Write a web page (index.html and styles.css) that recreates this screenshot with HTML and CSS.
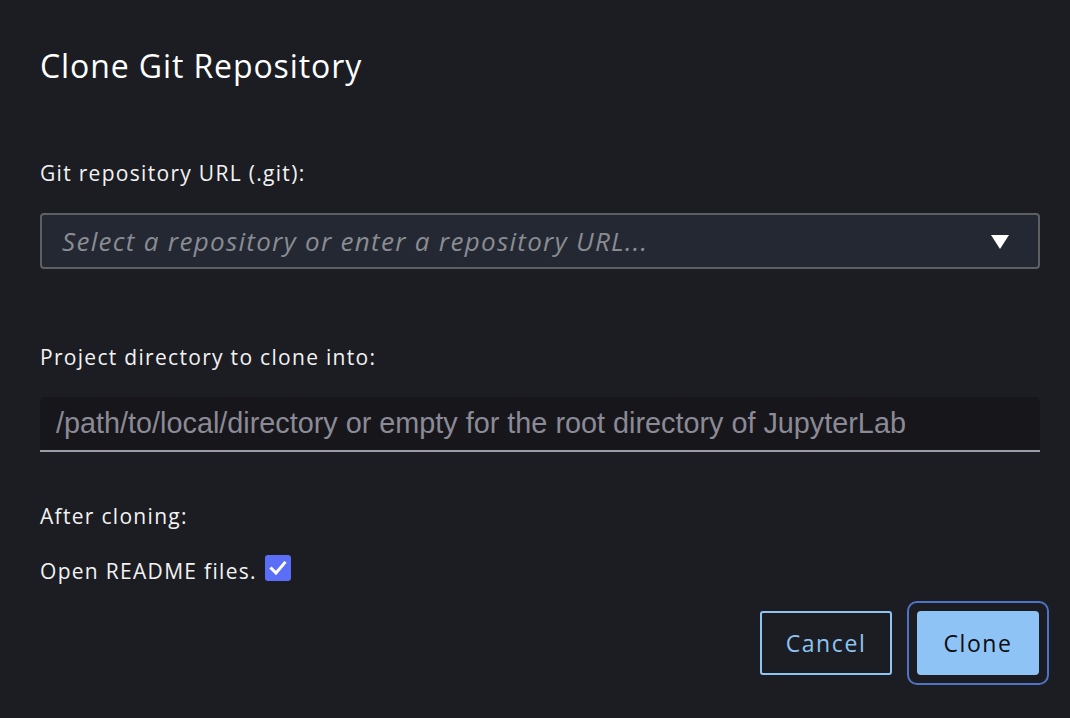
FILE: index.html
```html
<!DOCTYPE html>
<html>
<head>
<meta charset="utf-8">
<link rel="stylesheet" href="styles.css">
</head>
<body>
<div class="dialog">
  <h1 class="title">Clone Git Repository</h1>
  <label class="label first">Git repository URL (.git):</label>
  <div class="select">
    <span class="select-ph">Select a repository or enter a repository URL...</span>
    <svg class="caret" width="20" height="16" viewBox="0 0 20 16"><polygon points="1,1 19,1 10,15" fill="#ffffff"/></svg>
  </div>
  <label class="label second">Project directory to clone into:</label>
  <div class="input"><span class="input-ph">/path/to/local/directory or empty for the root directory of JupyterLab</span></div>
  <div class="label third">After cloning:</div>
  <div class="check-row">
    <span>Open README files.</span>
    <span class="checkbox"><svg width="18" height="16" viewBox="0 0 18 16"><path d="M2.5 8.5 L7 13 L15.5 3" fill="none" stroke="#ffffff" stroke-width="3" stroke-linecap="square"/></svg></span>
  </div>
  <div class="actions">
    <button class="btn cancel">Cancel</button>
    <div class="focus-ring"><button class="btn clone">Clone</button></div>
  </div>
</div>
</body>
</html>
```
FILE: styles.css
```css
html, body {
  margin: 0;
  padding: 0;
  background: #1c1d22;
}
body {
  width: 1070px;
  height: 718px;
  overflow: hidden;
  font-family: "Open Sans", "Noto Sans", sans-serif;
  color: #ffffff;
}
.dialog {
  padding: 0 30px 0 40px;
  display: flex;
  flex-direction: column;
}
.title {
  margin: 41px 0 0 0;
  font-size: 32px;
  font-weight: 400;
  line-height: 50px;
  letter-spacing: 0.9px;
}
.label {
  display: block;
  font-size: 21px;
  line-height: 28px;
  letter-spacing: 1.3px;
  color: #f2f2f2;
}
.label.first { margin-top: 68px; }
.select {
  margin-top: 26px;
  height: 52px;
  border: 2px solid #5d5f63;
  border-radius: 4px;
  background: #232833;
  display: flex;
  align-items: center;
  justify-content: space-between;
  padding: 0 28px 0 20px;
}
.select-ph {
  font-style: italic;
  font-size: 26px;
  color: #8a8c91;
  letter-spacing: 1.3px;
}
.caret { display: block; margin-top: 2px; }
.label.second { margin-top: 74px; }
.input {
  margin-top: 26px;
  height: 53px;
  background: #17171b;
  border-radius: 5px 5px 0 0;
  border-bottom: 2px solid #9d9aa9;
  display: flex;
  align-items: center;
  padding-left: 16px;
}
.input-ph {
  font-family: "Liberation Sans", Arial, sans-serif;
  font-size: 28.8px;
  color: #8b8a96;
}
.label.third { margin-top: 50px; }
.check-row {
  margin-top: 27px;
  display: flex;
  align-items: center;
  gap: 8px;
  font-size: 21px;
  letter-spacing: 1.3px;
  color: #f2f2f2;
}
.checkbox {
  width: 26px;
  height: 26px;
  border-radius: 3px;
  background: #5a6ff5;
  display: flex;
  align-items: center;
  justify-content: center;
  margin-top: -6px;
}
.checkbox svg { display: block; }
.actions {
  margin-top: 16px;
  margin-right: -9px;
  display: flex;
  justify-content: flex-end;
  align-items: center;
  gap: 15px;
}
.btn {
  font-family: "Open Sans", "Noto Sans", sans-serif;
  font-size: 23px;
  letter-spacing: 1.6px;
  height: 64px;
  border-radius: 3px;
  cursor: pointer;
}
.cancel {
  width: 132px;
  background: transparent;
  border: 2px solid #8dc4f2;
  color: #8dc4f2;
}
.focus-ring {
  border: 2px solid #4f73c7;
  border-radius: 10px;
  padding: 8px;
}
.clone {
  display: block;
  width: 122px;
  background: #8ec4f5;
  border: none;
  color: #0b0c10;
  border-radius: 4px;
}
```
